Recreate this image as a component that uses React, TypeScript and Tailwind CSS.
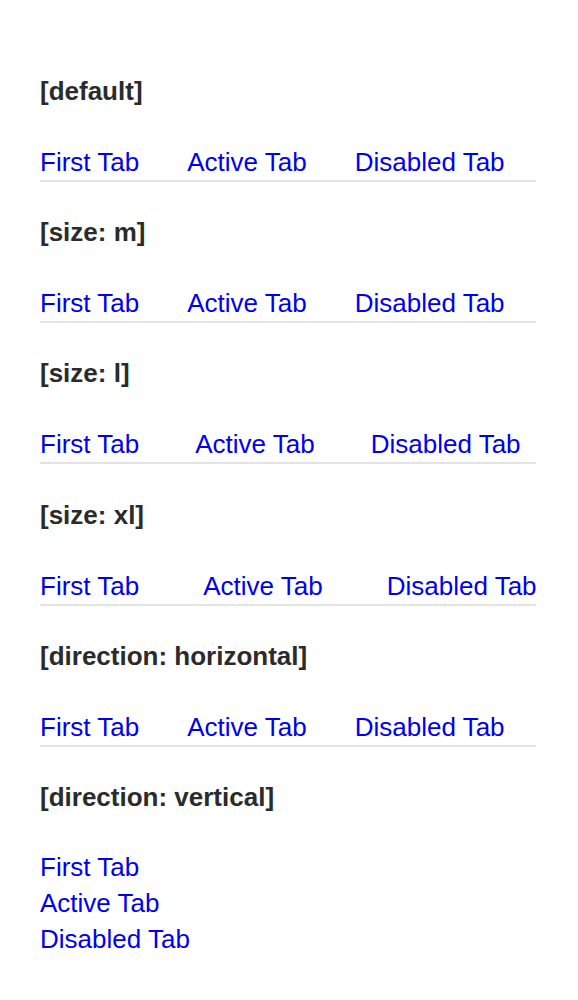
const tabs = ['First Tab', 'Active Tab', 'Disabled Tab'];

function Heading({ children }: { children: string }) {
  return <div className="text-[26px] font-bold leading-8 text-[#2b2b2b]">{children}</div>;
}

function TabRow({ gap }: { gap: string }) {
  return (
    <div className={`mt-[37px] flex border-b-2 border-[#e3e3e3] ${gap}`}>
      {tabs.map((t) => (
        <span key={t} className="shrink-0 whitespace-nowrap text-[26px] leading-9 text-[#0000ee]">{t}</span>
      ))}
    </div>
  );
}

export default function App() {
  return (
    <div className="min-h-screen bg-white pl-10 pt-[75px] font-['Liberation_Sans',Arial,sans-serif]">
      <div className="flex w-[496px] flex-col">
        <Heading>[default]</Heading>
        <TabRow gap="gap-[48px]" />
        <div className="mt-[34.2px]"><Heading>[size: m]</Heading></div>
        <TabRow gap="gap-[48px]" />
        <div className="mt-[34.2px]"><Heading>[size: l]</Heading></div>
        <TabRow gap="gap-[56px]" />
        <div className="mt-[34.2px]"><Heading>[size: xl]</Heading></div>
        <TabRow gap="gap-[64px]" />
        <div className="mt-[34.2px]"><Heading>[direction: horizontal]</Heading></div>
        <TabRow gap="gap-[48px]" />
        <div className="mt-[34.2px]"><Heading>[direction: vertical]</Heading></div>
        <div className="mt-[36px] flex flex-col">
          {tabs.map((t) => (
            <span key={t} className="whitespace-nowrap text-[26px] leading-9 text-[#0000ee]">{t}</span>
          ))}
        </div>
      </div>
    </div>
  );
}
